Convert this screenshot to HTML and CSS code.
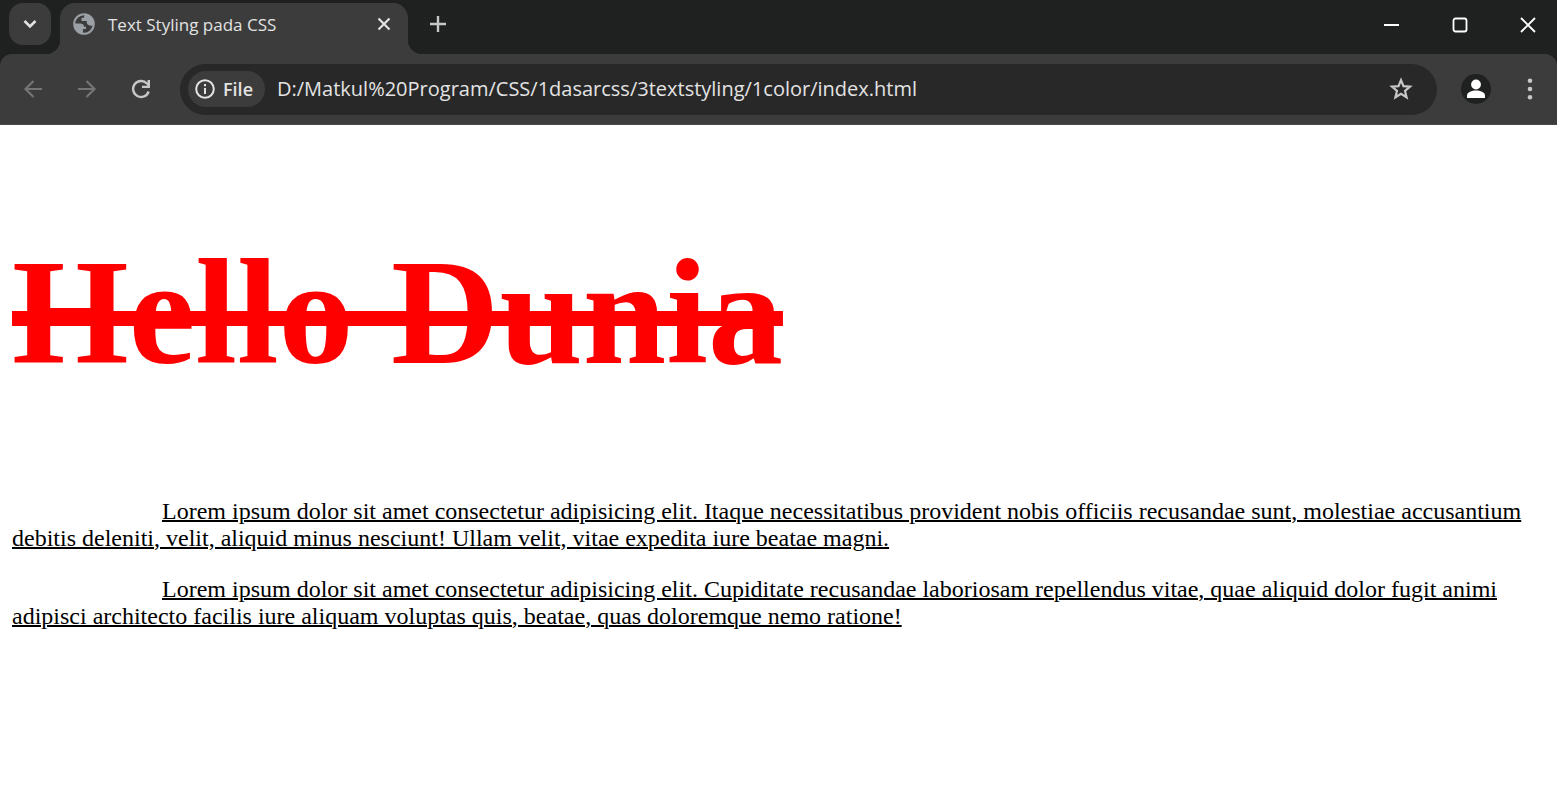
FILE: index.html
```html
<!DOCTYPE html>
<html lang="id">
<head>
<meta charset="utf-8">
<title>Text Styling pada CSS</title>
<link rel="stylesheet" href="styles.css">
</head>
<body>
<header class="browser">
  <div class="tab-strip">
    <button class="tab-search" aria-label="Search tabs"><svg width="14" height="14" viewBox="0 0 14 14"><path d="M1.500 4l5.500 5.500L12.500 4" fill="none" stroke="#e3e3e3" stroke-width="2.600"/></svg></button>
    <div class="tab">
      <svg class="globe" width="22" height="22" viewBox="0 0 22 22"><circle cx="11" cy="11" r="9.800" fill="#3c3c3c" stroke="#9aa0a6" stroke-width="2"/><path d="M1.500 10.500h5.500c2.500 0 4 1 4 3.300h2v2.200h-3v4.800C5 20.500 1 16 1.500 10.500zM12 1.300c-1 1-1 2.200-.7 3.200L8.500 5v3h5.300v2.300c1 2.200 3 2.700 6.700 2.200C21.600 6 17.500 1.500 12 1.300z" fill="#9aa0a6"/></svg>
      <span class="tab-title">Text Styling pada CSS</span>
      <button class="tab-close" aria-label="Close tab"><svg width="14" height="14" viewBox="0 0 14 14"><path d="M1.500 1.500l11 11M12.500 1.500l-11 11" stroke="#e3e3e3" stroke-width="2.200"/></svg></button>
    </div>
    <button class="new-tab" aria-label="New tab"><svg width="16" height="16" viewBox="0 0 16 16"><path d="M8 0v16M0 8h16" stroke="#c7c7c7" stroke-width="2.400"/></svg></button>
    <div class="window-controls">
      <button aria-label="Minimize"><svg width="16" height="16" viewBox="0 0 16 16"><path d="M0 8h15" stroke="#fff" stroke-width="2"/></svg></button>
      <button aria-label="Maximize"><svg width="16" height="16" viewBox="0 0 16 16"><rect x="1.500" y="1.500" width="13" height="13" rx="2" fill="none" stroke="#fff" stroke-width="1.800"/></svg></button>
      <button aria-label="Close"><svg width="16" height="16" viewBox="0 0 16 16"><path d="M1 1l14 14M15 1L1 15" stroke="#fff" stroke-width="1.900"/></svg></button>
    </div>
  </div>
  <div class="toolbar">
    <nav class="nav">
      <button aria-label="Back"><svg width="20" height="20" viewBox="0 0 20 20"><path d="M19 10H3M10.500 2L2.500 10l8 8" fill="none" stroke="#757575" stroke-width="2.200"/></svg></button>
      <button aria-label="Forward"><svg width="20" height="20" viewBox="0 0 20 20"><path d="M1 10h16M9.500 2l8 8-8 8" fill="none" stroke="#757575" stroke-width="2.200"/></svg></button>
      <button aria-label="Reload"><svg width="20" height="20" viewBox="0 0 20 20"><path d="M17.700 12.500A8 8 0 1 1 16 4.500l2 2" fill="none" stroke="#c7c7c7" stroke-width="2.400"/><path d="M19 1v8h-8V6.700h5.500V1z" fill="#c7c7c7"/></svg></button>
    </nav>
    <div class="address">
      <button class="chip"><svg width="20" height="20" viewBox="0 0 20 20"><circle cx="10" cy="10" r="8.800" fill="none" stroke="#e3e3e3" stroke-width="2"/><path d="M10 9v6M10 5v2.200" stroke="#e3e3e3" stroke-width="2"/></svg>File</button>
      <input class="url" type="text" aria-label="Address" value="D:/Matkul%20Program/CSS/1dasarcss/3textstyling/1color/index.html">
      <button class="star" aria-label="Bookmark this page"><svg width="24" height="24" viewBox="0 0 24 24"><path d="M12 3.200l2.500 6 6.500.5-5 4.300 1.600 6.300L12 16.900l-5.600 3.400L8 14 3 9.700l6.500-.5z" fill="none" stroke="#c7c7c7" stroke-width="2.200"/></svg></button>
    </div>
    <button class="profile" aria-label="Profile"><svg width="30" height="30" viewBox="0 0 30 30"><circle cx="15" cy="15" r="15" fill="#1f2120"/><circle cx="15" cy="10.500" r="4.900" fill="#fff"/><path d="M6 24v-2.500c0-3.500 5-5 9-5s9 1.500 9 5V24z" fill="#fff"/></svg></button>
    <button class="menu" aria-label="Menu"><svg width="6" height="22" viewBox="0 0 6 22"><g fill="#c7c7c7"><circle cx="3" cy="2.700" r="2.300"/><circle cx="3" cy="11" r="2.300"/><circle cx="3" cy="19.300" r="2.300"/></g></svg></button>
  </div>
</header>
<main class="page">
  <h1 class="title">Hello Dunia</h1>
  <p class="text">Lorem ipsum dolor sit amet consectetur adipisicing elit. Itaque necessitatibus provident nobis officiis recusandae sunt, molestiae accusantium debitis deleniti, velit, aliquid minus nesciunt! Ullam velit, vitae expedita iure beatae magni.</p>
  <p class="text">Lorem ipsum dolor sit amet consectetur adipisicing elit. Cupiditate recusandae laboriosam repellendus vitae, quae aliquid dolor fugit animi adipisci architecto facilis iure aliquam voluptas quis, beatae, quas doloremque nemo ratione!</p>
</main>
</body>
</html>
```
FILE: styles.css
```css
* { box-sizing: border-box; }
body { margin: 0; background: #fff; }
button { display: flex; align-items: center; justify-content: center; flex: none; padding: 0; border: 0; background: none; color: inherit; font: inherit; }
svg { display: block; flex: none; }

.browser { background: #1f2120; color: #e3e3e3; font-family: "Open Sans", "Noto Sans", sans-serif; }
.tab-strip { display: flex; height: 54px; padding-left: 9px; }
.tab-search { width: 42px; height: 42px; margin: 3px 9px 0 0; border-radius: 14px; background: #3c3c3c; }
.tab { position: relative; display: flex; align-items: center; width: 348px; height: 51px; margin-top: 3px; padding: 0 17px 9px 13px; border-radius: 15px 15px 0 0; background: #3c3c3c; }
.tab::before, .tab::after { content: ""; position: absolute; bottom: 0; width: 15px; height: 15px; }
.tab::before { right: 100%; background: radial-gradient(circle at 0 0, transparent 15px, #3c3c3c 16px); }
.tab::after { left: 100%; background: radial-gradient(circle at 100% 0, transparent 15px, #3c3c3c 16px); }
.tab-title { flex: 1; margin-left: 13px; padding-top: 2px; font-size: 17px; line-height: 24px; white-space: nowrap; }
.new-tab { width: 42px; height: 42px; margin: 3px 0 0 9px; }
.window-controls { display: flex; gap: 10px; margin-left: auto; }
.window-controls button { width: 58px; height: 50px; }

.toolbar { display: flex; align-items: center; height: 71px; padding: 0 24px 0 23px; border-bottom: 1px solid #4a4848; border-radius: 12px 12px 0 0; background: #3c3c3c; }
.nav { display: flex; gap: 34px; margin-right: 29px; }
.address { display: flex; flex: 1; align-items: center; height: 51px; min-width: 0; padding: 0 24px 0 8px; border-radius: 26px; background: #282828; }
.chip { gap: 8px; height: 36px; padding: 0 12px 0 7px; border-radius: 18px; background: #3c3c3c; font-size: 18px; font-weight: 600; }
.url { flex: 1; min-width: 0; margin: 0 12px; padding: 0; border: 0; outline: 0; background: none; color: #e3e3e3; font: 20px/28px "Open Sans", "Noto Sans", sans-serif; }
.profile { margin: 0 36px 0 24px; }

.page { padding: 0 12px; font-family: "Liberation Serif", "Times New Roman", serif; }
.title { margin: 101px 0 100px; color: red; font-size: 150px; line-height: 172px; text-decoration: line-through; text-decoration-thickness: 15px; }
.text { margin: 0 0 24px; color: #000; font-size: 24px; line-height: 27px; text-indent: 150px; text-decoration: underline; text-decoration-thickness: 2px; }
```
